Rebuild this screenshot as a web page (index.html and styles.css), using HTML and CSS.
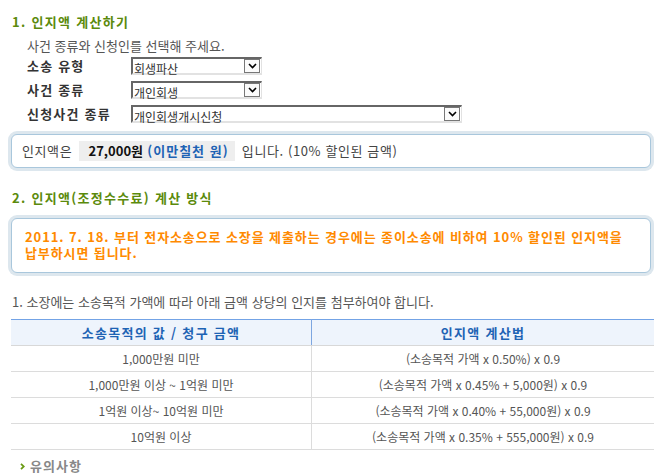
FILE: index.html
```html
<!DOCTYPE html>
<html lang="ko">
<head>
    <meta charset="UTF-8">
    <title>인지액 계산하기</title>
    <link rel="stylesheet" href="styles.css">
</head>
<body>

<h2 class="section-title">1. 인지액 계산하기</h2>
<p class="guide">사건 종류와 신청인를 선택해 주세요.</p>

<div class="form-row">
    <label for="type">소송 유형</label>
    <div class="select short">
        <select id="type"><option>회생파산</option></select>
        <span class="arrow"><svg width="9" height="6" viewBox="0 0 9 6"><path d="M1 1 L4.5 4.5 L8 1" fill="none" stroke="#000" stroke-width="1.6"/></svg></span>
    </div>
</div>
<div class="form-row">
    <label for="kind">사건 종류</label>
    <div class="select short">
        <select id="kind"><option>개인회생</option></select>
        <span class="arrow"><svg width="9" height="6" viewBox="0 0 9 6"><path d="M1 1 L4.5 4.5 L8 1" fill="none" stroke="#000" stroke-width="1.6"/></svg></span>
    </div>
</div>
<div class="form-row">
    <label for="apply">신청사건 종류</label>
    <div class="select long">
        <select id="apply"><option>개인회생개시신청</option></select>
        <span class="arrow"><svg width="9" height="6" viewBox="0 0 9 6"><path d="M1 1 L4.5 4.5 L8 1" fill="none" stroke="#000" stroke-width="1.6"/></svg></span>
    </div>
</div>

<div class="box result">
    인지액은
    <span class="amount"><b>27,000원</b> <em>(이만칠천 원)</em></span>
    입니다. (10% 할인된 금액)
</div>

<h2 class="section-title second">2. 인지액(조정수수료) 계산 방식</h2>

<div class="box notice">
    2011. 7. 18. 부터 전자소송으로 소장을 제출하는 경우에는 종이소송에 비하여 10% 할인된 인지액을
    납부하시면 됩니다.
</div>

<p class="table-caption">1. 소장에는 소송목적 가액에 따라 아래 금액 상당의 인지를 첨부하여야 합니다.</p>

<table class="fee-table">
    <thead>
        <tr>
            <th>소송목적의 값 / 청구 금액</th>
            <th>인지액 계산법</th>
        </tr>
    </thead>
    <tbody>
        <tr>
            <td>1,000만원 미만</td>
            <td>(소송목적 가액 x 0.50%) x 0.9</td>
        </tr>
        <tr>
            <td>1,000만원 이상 ~ 1억원 미만</td>
            <td>(소송목적 가액 x 0.45% + 5,000원) x 0.9</td>
        </tr>
        <tr>
            <td>1억원 이상~ 10억원 미만</td>
            <td>(소송목적 가액 x 0.40% + 55,000원) x 0.9</td>
        </tr>
        <tr>
            <td>10억원 이상</td>
            <td>(소송목적 가액 x 0.35% + 555,000원) x 0.9</td>
        </tr>
    </tbody>
</table>

<h3 class="sub-title">
    <svg class="bullet" width="5" height="7" viewBox="0 0 5 7"><path d="M1 0.8 L3.8 3.5 L1 6.2" fill="none" stroke="#6a9a14" stroke-width="1.8"/></svg>
    유의사항
</h3>

</body>
</html>
```

FILE: styles.css
```css
body {
    font-family: "Noto Sans CJK KR", "Noto Sans", sans-serif;
    font-size: 13px;
    color: #555;
    background: #fff;
    margin: 0;
    padding: 14px 8px 0 10px;
}

.section-title {
    margin: 0 0 0 2px;
    font-size: 13px;
    line-height: 16px;
    font-weight: bold;
    letter-spacing: 1.3px;
    color: #5b8a0c;
}

.section-title.second {
    margin-top: 22px;
}

.guide {
    margin: 8px 0 0 17px;
    line-height: 16px;
}

.form-row {
    display: flex;
    align-items: center;
    margin: 1px 0 0 17px;
    height: 21px;
}

.form-row + .form-row {
    margin-top: 3px;
}

.form-row label {
    width: 104px;
    font-weight: bold;
    letter-spacing: 1.2px;
    color: #333;
}

.select {
    position: relative;
    height: 18px;
    box-sizing: border-box;
    border-top: 2px solid #666;
    border-left: 2px solid #666;
    border-right: 1px solid #e2e2e2;
    border-bottom: 2px solid #e2e2e2;
    background: #fff;
}

.select.short {
    width: 131px;
}

.select.long {
    width: 331px;
}

.select select {
    appearance: none;
    border: none;
    outline: none;
    background: transparent;
    width: 100%;
    height: 100%;
    padding: 0 0 0 1px;
    margin: 0;
    font-family: inherit;
    font-size: 12px;
    line-height: 14px;
    color: #333;
}

.arrow {
    position: absolute;
    top: 0;
    right: 1px;
    width: 16px;
    height: 14px;
    box-sizing: border-box;
    border: 1px solid #777;
    background: #fbfbfb;
    display: flex;
    align-items: center;
    justify-content: center;
}

.box {
    border: 1px solid #a9c7dc;
    border-radius: 6px;
    box-shadow: 0 0 0 3px #dde7ee;
    background: #fff;
}

.result {
    margin: 10px 2px 0 1px;
    padding: 6px 10px;
    line-height: 20px;
    letter-spacing: 0.6px;
    color: #444;
}

.amount {
    display: inline-block;
    vertical-align: top;
    background: #eee;
    padding: 0 6px 0 9px;
    margin: 0 3px 0 3px;
}

.amount b {
    color: #111;
    letter-spacing: 0;
}

.amount em {
    font-style: normal;
    font-weight: bold;
    letter-spacing: 1px;
    color: #1e63b4;
}

.notice {
    margin: 12px 2px 0 1px;
    padding: 10px 12px 11px 13px;
    line-height: 16px;
    font-weight: bold;
    letter-spacing: 0.9px;
    color: #ff8a00;
}

.table-caption {
    margin: 21px 0 0 2px;
    line-height: 16px;
}

.fee-table {
    width: 643px;
    margin: 9px 0 0 1px;
    border-collapse: collapse;
    border-top: 1px solid #73a3e6;
    font-size: 12px;
}

.fee-table th {
    height: 25px;
    background: #eef4fc;
    color: #1e63b4;
    font-size: 13px;
    font-weight: bold;
    letter-spacing: 1.3px;
    border-bottom: 1px solid #d8d8d8;
    padding: 0;
}

.fee-table th:first-child {
    width: 300px;
    border-right: 1px solid #7da6e0;
}

.fee-table td {
    height: 25px;
    text-align: center;
    border-bottom: 1px solid #dcdcdc;
    padding: 0;
    color: #555;
}

.fee-table td:first-child {
    border-right: 1px solid #dcdcdc;
}

.sub-title {
    display: flex;
    align-items: center;
    gap: 5px;
    margin: 8px 0 0 10px;
    font-size: 13px;
    line-height: 16px;
    letter-spacing: 1px;
    color: #888;
}
```
